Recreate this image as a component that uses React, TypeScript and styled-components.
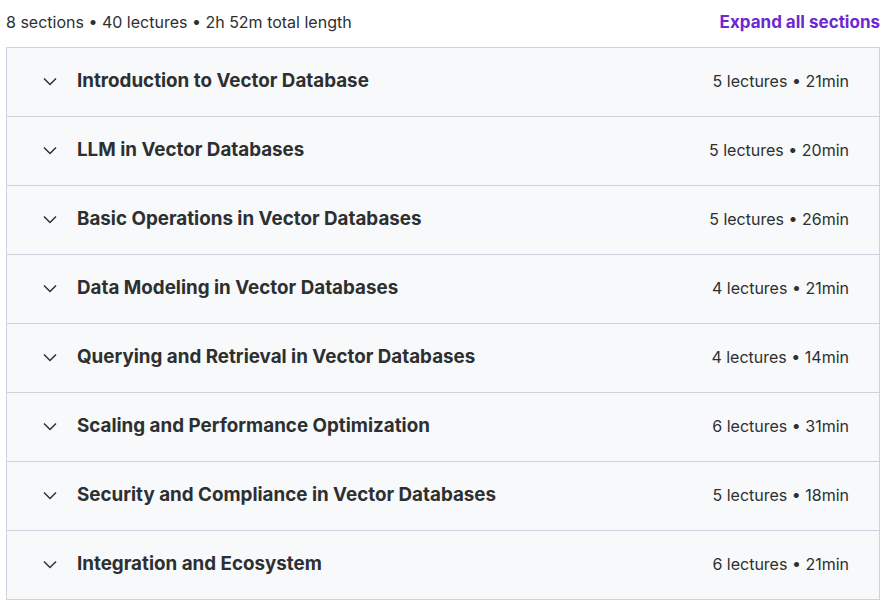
import React from "react";
import styled, { createGlobalStyle } from "styled-components";

const Global = createGlobalStyle`
  html, body { margin: 0; padding: 0; background: #ffffff; }
  body { font-family: Inter, "Noto Sans", sans-serif; color: #2d2f31; }
`;

const Page = styled.div`
  padding: 0 6px;
`;

const Header = styled.div`
  display: flex;
  align-items: center;
  justify-content: space-between;
  height: 43px;
  padding-bottom: 4px;
`;

const Summary = styled.span`
  font-size: 16px;
  color: #2d2f31;
`;

const ExpandButton = styled.button`
  border: none;
  background: none;
  padding: 0;
  font-family: inherit;
  font-size: 17px;
  font-weight: 700;
  color: #6d28d2;
  cursor: pointer;
`;

const Accordion = styled.div`
  border: 1px solid #d1d2e0;
  border-bottom: none;
`;

const Row = styled.div`
  display: flex;
  align-items: center;
  box-sizing: border-box;
  height: 69px;
  padding: 0 30px 3px 36px;
  background: #f7f9fa;
  border-bottom: 1px solid #d1d2e0;
`;

const Chevron = styled.svg`
  width: 14px;
  height: 14px;
  flex: none;
  margin-right: 20px;
`;

const Title = styled.span`
  flex: 1;
  font-size: 18.8px;
  font-weight: 700;
  color: #2d2f31;
`;

const Meta = styled.span`
  font-size: 16px;
  color: #2d2f31;
`;

const sections = [
  ["Introduction to Vector Database", "5 lectures • 21min"],
  ["LLM in Vector Databases", "5 lectures • 20min"],
  ["Basic Operations in Vector Databases", "5 lectures • 26min"],
  ["Data Modeling in Vector Databases", "4 lectures • 21min"],
  ["Querying and Retrieval in Vector Databases", "4 lectures • 14min"],
  ["Scaling and Performance Optimization", "6 lectures • 31min"],
  ["Security and Compliance in Vector Databases", "5 lectures • 18min"],
  ["Integration and Ecosystem", "6 lectures • 21min"],
];

export default function App() {
  return (
    <Page>
      <Global />
      <Header>
        <Summary>8 sections • 40 lectures • 2h 52m total length</Summary>
        <ExpandButton>Expand all sections</ExpandButton>
      </Header>
      <Accordion>
        {sections.map(([t, m]) => (
          <Row key={t}>
            <Chevron viewBox="0 0 14 14" fill="none">
              <path d="M1 4.5 L7 10.5 L13 4.5" stroke="#2d2f31" strokeWidth="1.5" />
            </Chevron>
            <Title>{t}</Title>
            <Meta>{m}</Meta>
          </Row>
        ))}
      </Accordion>
    </Page>
  );
}
